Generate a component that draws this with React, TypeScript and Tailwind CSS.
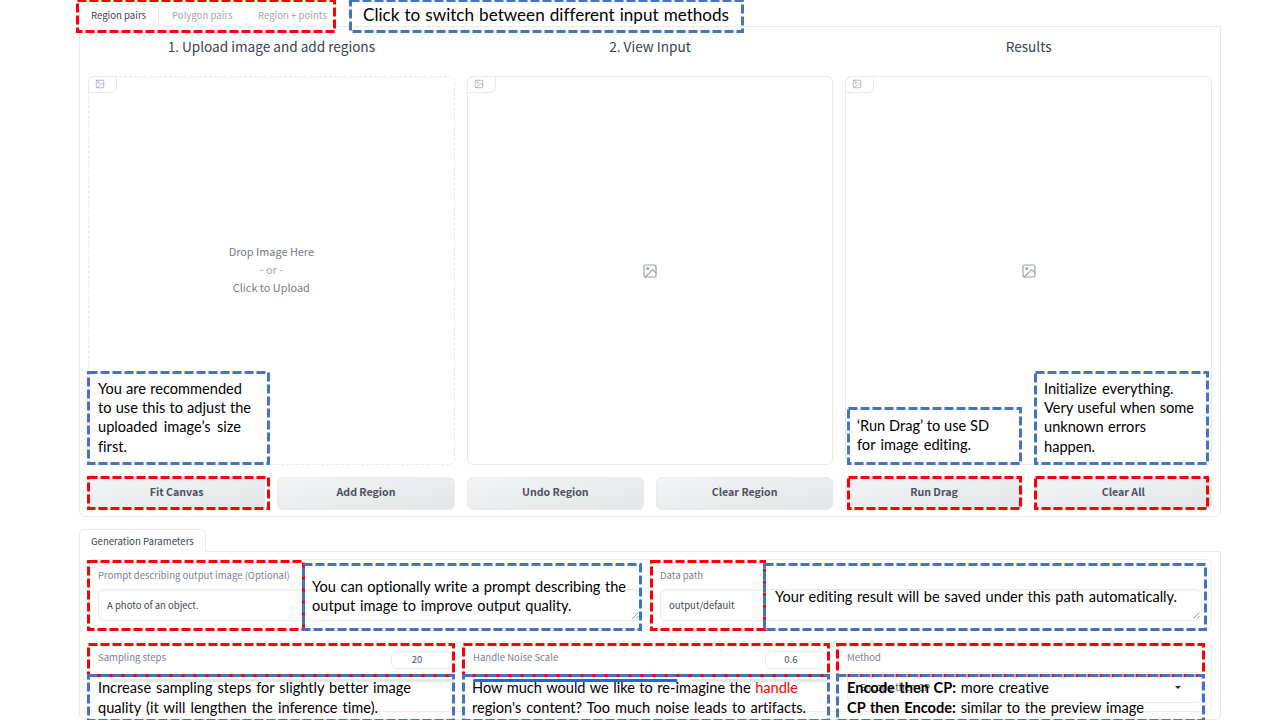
import type { ReactNode } from 'react';

function ImageIcon({ className }: { className: string }) {
  return (
    <svg className={className} viewBox="0 0 24 24" fill="none" stroke="currentColor" strokeWidth="1.8" strokeLinecap="round" strokeLinejoin="round">
      <rect x="3" y="3" width="18" height="18" rx="2" />
      <circle cx="8.5" cy="8.5" r="1.5" />
      <polyline points="21 15 16 10 5 21" />
    </svg>
  );
}

function ImagePanel({ dashed, children }: { dashed?: boolean; children: ReactNode }) {
  return (
    <div className={`relative flex h-[389px] items-center justify-center rounded-[6px] border border-[#e8eaed] ${dashed ? 'border-dashed' : 'border-solid'}`}>
      <div className="absolute -top-px -left-px flex h-[17px] w-[29px] items-center rounded-tl-[6px] rounded-br-[6px] border border-[#e8eaed] pb-px pl-[6px] text-[#9ca3af]">
        <ImageIcon className="size-[10px]" />
      </div>
      {children}
    </div>
  );
}

function ActionButton({ children }: { children: ReactNode }) {
  return (
    <button className="h-[33px] rounded-[6px] border border-[#e8eaee] bg-linear-to-br from-[#f3f4f6] to-[#e3e5e9] pb-[3px] text-[10.6px] leading-none font-bold text-[#4b5060]">
      {children}
    </button>
  );
}

function ResizeHandle() {
  return (
    <svg className="absolute right-[1px] bottom-[1px] size-[7px]" viewBox="0 0 7 7" stroke="#7d7d7d" strokeWidth="0.8">
      <path d="M0.5 6.5 6.5 0.5M4 6.5 6.5 4" />
    </svg>
  );
}

function TextField({ label, value, className }: { label: string; value: string; className?: string }) {
  return (
    <label className={`flex flex-col px-[9px] pt-[9px] ${className ?? ''}`}>
      <span className="text-[9.55px] leading-[13px] text-[#7b8190]">{label}</span>
      <span className="relative mt-[7px] flex h-[32px] items-center rounded-[6px] border border-[#e8eaed] pt-px pl-[8px] text-[9.55px] leading-none text-[#3f4654] shadow-[inset_0_1px_2px_rgba(0,0,0,0.04)]">
        {value}
        <ResizeHandle />
      </span>
    </label>
  );
}

function SliderField({ label, value, children, className }: { label: string; value: string; children: ReactNode; className?: string }) {
  return (
    <div className={`pr-[9px] pl-[9px] ${className ?? ''}`}>
      <div className="flex justify-between pt-[9px]">
        <span className="text-[9.55px] leading-[13px] text-[#7b8190]">{label}</span>
        <span className="flex h-[18px] w-[63px] items-center justify-center rounded-[6px] border border-[#e8eaed] pr-[11px] text-[9.55px] leading-none text-[#4b5260] shadow-[inset_0_1px_2px_rgba(0,0,0,0.04)]">
          {value}
        </span>
      </div>
      {children}
    </div>
  );
}

function Thumb() {
  return <span className="-ml-px size-[15px] shrink-0 rounded-full border border-[#ededf0] bg-white shadow-[0_1px_2px_rgba(0,0,0,0.06)]" />;
}

function Callout({ className, color, children }: { className: string; color: string; children?: ReactNode }) {
  return (
    <div className={`absolute ${className}`}>
      <svg className="pointer-events-none absolute inset-0 size-full overflow-visible" fill="none">
        <rect x="0.5" y="0.5" width="100%" height="100%" stroke={color} strokeWidth="3" strokeDasharray="9 3" />
      </svg>
      {children}
    </div>
  );
}

function Line({ className, children }: { className?: string; children: ReactNode }) {
  return <div className={`whitespace-nowrap [text-align-last:justify] ${className ?? ''}`}>{children}</div>;
}

const BLUE = '#4472c4';
const RED = '#ff0000';
const note = "relative font-['Lato',sans-serif] text-[14.6px] leading-[19.2px] text-black [font-variant-ligatures:none]";

function Annotations() {
  return (
    <div className="absolute inset-0">
      <Callout color={RED} className="top-0 left-[77px] h-[31px] w-[257px]" />
      <Callout color={BLUE} className="top-0 left-[350px] h-[31px] w-[392px]">
        <div className="relative pt-[3px] pl-[13px] font-['Lato',sans-serif] text-[17.1px] leading-[24px] text-black [font-variant-ligatures:none]">
          <Line className="w-[366px]">Click to switch between different input methods</Line>
        </div>
      </Callout>

      <Callout color={RED} className="top-[477px] left-[88px] h-[31px] w-[180px]" />
      <Callout color={BLUE} className="top-[372px] left-[88px] h-[91px] w-[180px]">
        <div className={`${note} pt-[7px] pl-[10px]`}>
          <Line className="w-[144px]">You are recommended</Line>
          <Line className="w-[153px]">to use this to adjust the</Line>
          <Line className="w-[143px]">uploaded image’s size</Line>
          <Line className="w-[30px]">first.</Line>
        </div>
      </Callout>

      <Callout color={RED} className="top-[477px] left-[848px] h-[31px] w-[172px]" />
      <Callout color={BLUE} className="top-[408px] left-[848px] h-[55px] w-[172px]">
        <div className={`${note} pt-[8.1px] pl-[9px]`}>
          <Line className="w-[132px]">‘Run Drag’ to use SD</Line>
          <Line className="w-[114px]">for image editing.</Line>
        </div>
      </Callout>

      <Callout color={RED} className="top-[477px] left-[1035px] h-[31px] w-[172px]" />
      <Callout color={BLUE} className="top-[372px] left-[1035px] h-[91px] w-[172px]">
        <div className={`${note} pt-[7px] pl-[9px]`}>
          <Line className="w-[129.5px]">Initialize everything.</Line>
          <Line className="w-[150px]">Very useful when some</Line>
          <Line className="w-[102px]">unknown errors</Line>
          <Line className="w-[52px]">happen.</Line>
        </div>
      </Callout>

      <Callout color={RED} className="top-[561px] left-[88px] h-[68px] w-[215px]" />
      <Callout color={BLUE} className="top-[564px] left-[303px] h-[65px] w-[337px]">
        <div className={`${note} pt-[13px] pl-[9px]`}>
          <Line className="w-[314px]">You can optionally write a prompt describing the</Line>
          <Line className="w-[259.5px]">output image to improve output quality.</Line>
        </div>
      </Callout>

      <Callout color={RED} className="top-[561px] left-[651px] h-[68px] w-[113px]" />
      <Callout color={BLUE} className="top-[564px] left-[764px] h-[65px] w-[441px]">
        <div className={`${note} pt-[23px] pl-[11px]`}>
          <Line className="w-[402px]">Your editing result will be saved under this path automatically.</Line>
        </div>
      </Callout>

      <Callout color={RED} className="top-[644px] left-[88px] h-[31px] w-[365px]" />
      <Callout color={BLUE} className="top-[675px] left-[88px] h-[45px] w-[365px]">
        <div className={`${note} pt-[3.4px] pl-[10px]`}>
          <Line className="w-[313px]">Increase sampling steps for slightly better image</Line>
          <Line className="w-[280px]">quality (it will lengthen the inference time).</Line>
        </div>
      </Callout>

      <Callout color={RED} className="top-[644px] left-[463px] h-[31px] w-[365px]" />
      <Callout color={BLUE} className="top-[675px] left-[463px] h-[45px] w-[365px]">
        <div className={`${note} pt-[3.4px] pl-[9px]`}>
          <Line className="w-[326px]">
            How much would we like to re-imagine the <span className="text-[#ff0000]">handle</span>
          </Line>
          <Line className="w-[334px]">region's content? Too much noise leads to artifacts.</Line>
        </div>
      </Callout>

      <Callout color={RED} className="top-[644px] left-[837px] h-[31px] w-[366px]" />
      <Callout color={BLUE} className="top-[675px] left-[837px] h-[45px] w-[366px]">
        <div className={`${note} pt-[3.4px] pl-[10px]`}>
          <Line className="w-[202px]">
            <b>Encode then CP:</b> more creative
          </Line>
          <Line className="w-[297px]">
            <b>CP then Encode:</b> similar to the preview image
          </Line>
        </div>
      </Callout>
    </div>
  );
}

export default function App() {
  return (
    <div className="relative h-[720px] w-[1280px] overflow-hidden bg-white font-['Noto_Sans_CJK_SC',sans-serif]">
      <main className="flex flex-col pt-[4px] pl-[79px]">
        <nav className="relative z-10 -mb-px flex h-[23px] text-[9.6px] leading-[21px] text-[#a0a6b1]">
          <span className="w-[80px] rounded-t-[6px] border border-b-0 border-[#e8eaed] bg-white pl-[11px] whitespace-nowrap text-[#3d4451]">Region pairs</span>
          <span className="w-[86px] pt-px pl-[13px] whitespace-nowrap">Polygon pairs</span>
          <span className="pt-px pl-[13px] whitespace-nowrap">Region + points</span>
        </nav>
        <section className="h-[491px] w-[1142px] rounded-b-[6px] border border-[#e8eaed] px-[8px]">
          <div className="grid grid-cols-3 gap-x-[12px]">
            {['1. Upload image and add regions', '2. View Input', 'Results'].map((title) => (
              <h2 key={title} className="h-[49px] pt-[9px] text-center text-[13.6px] leading-[20px] text-[#374151]">
                {title}
              </h2>
            ))}
            <ImagePanel dashed>
              <div className="pb-[4px] text-center text-[10.9px] leading-[18px] text-[#747b88]">
                <p>Drop Image Here</p>
                <p className="text-[#a0a6b1]">- or -</p>
                <p>Click to Upload</p>
              </div>
            </ImagePanel>
            <ImagePanel>
              <ImageIcon className="size-[16px] text-[#9ca3af]" />
            </ImagePanel>
            <ImagePanel>
              <ImageIcon className="size-[16px] text-[#9ca3af]" />
            </ImagePanel>
          </div>
          <div className="mt-[12px] grid grid-cols-6 gap-x-[12px]">
            {['Fit Canvas', 'Add Region', 'Undo Region', 'Clear Region', 'Run Drag', 'Clear All'].map((name) => (
              <ActionButton key={name}>{name}</ActionButton>
            ))}
          </div>
        </section>

        <nav className="relative z-10 mt-[12px] -mb-px flex h-[23px] text-[9.6px] leading-[21px]">
          <span className="w-[127px] rounded-t-[6px] border border-b-0 border-[#e8eaed] bg-white pt-px pl-[11px] whitespace-nowrap text-[#3d4451]">Generation Parameters</span>
        </nav>
        <section className="h-[169px] w-[1142px] rounded-b-[6px] border border-[#e8eaed] px-[8px] pt-[7px]">
          <div className="flex h-[71px] rounded-[6px] border border-[#eceef1]">
            <TextField className="w-[562px] border-r border-[#eceef1]" label="Prompt describing output image (Optional)" value="A photo of an object." />
            <TextField className="flex-1" label="Data path" value="output/default" />
          </div>
          <div className="mt-[11px] grid h-[71px] grid-cols-3 rounded-[6px] border border-[#eceef1]">
            <SliderField label="Sampling steps" value="20">
              <div className="mt-[4px] flex h-[15px] items-center">
                <Thumb />
                <span className="h-[3px] flex-1 rounded-full bg-[#e5e7eb]" />
              </div>
            </SliderField>
            <SliderField label="Handle Noise Scale" value="0.6" className="border-l border-[#eceef1]">
              <div className="mt-[4px] flex h-[15px] items-center">
                <span className="h-[3px] w-[205px] rounded-full bg-[#2563eb]" />
                <Thumb />
                <span className="h-[3px] flex-1 rounded-full bg-[#e5e7eb]" />
              </div>
            </SliderField>
            <div className="border-l border-[#eceef1] pt-[9px] pr-[9px] pl-[9px]">
              <div className="text-[9.55px] leading-[13px] text-[#7b8190]">Method</div>
              <div className="mt-[8px] flex h-[31px] items-center justify-between rounded-[6px] border border-[#e8eaed] pr-[20px] pl-[12px] text-[9.55px] leading-none text-[#4b5260]">
                <span>Encode then CP</span>
                <svg className="h-[3px] w-[6px]" viewBox="0 0 6 3" fill="#1f2937">
                  <path d="M0 0h6L3 3z" />
                </svg>
              </div>
            </div>
          </div>
        </section>
      </main>
      <Annotations />
    </div>
  );
}
